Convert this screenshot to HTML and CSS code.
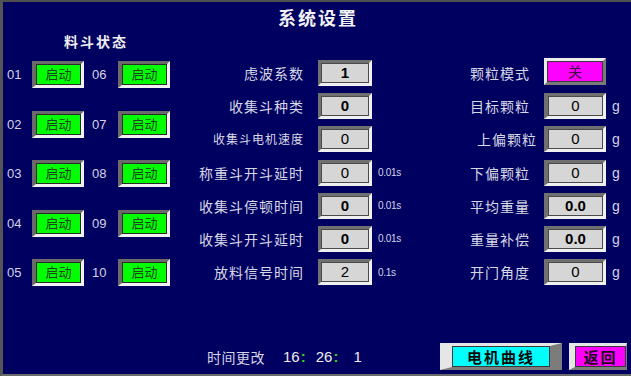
FILE: index.html
```html
<!DOCTYPE html>
<html lang="zh-CN">

<head>
    <meta charset="UTF-8">
    <meta name="viewport" content="width=device-width, initial-scale=1.0">
    <title>系统设置</title>
    <link rel="stylesheet" href="styles.css">
</head>

<body>
    <div class="screen">

        <div class="title">系统设置</div>

        <div class="main">

            <!-- hopper status -->
            <div class="status">
                <div class="status-head">料斗状态</div>
                <div class="status-grid">
                    <span class="num">01</span><div class="btn-start"><span>启动</span></div>
                    <span class="num second">06</span><div class="btn-start"><span>启动</span></div>

                    <span class="num">02</span><div class="btn-start"><span>启动</span></div>
                    <span class="num second">07</span><div class="btn-start"><span>启动</span></div>

                    <span class="num">03</span><div class="btn-start"><span>启动</span></div>
                    <span class="num second">08</span><div class="btn-start"><span>启动</span></div>

                    <span class="num">04</span><div class="btn-start"><span>启动</span></div>
                    <span class="num second">09</span><div class="btn-start"><span>启动</span></div>

                    <span class="num">05</span><div class="btn-start"><span>启动</span></div>
                    <span class="num second">10</span><div class="btn-start"><span>启动</span></div>
                </div>
            </div>

            <!-- timing params -->
            <div class="params">
                <div class="row">
                    <label>虑波系数</label>
                    <div class="field"><span class="bold">1</span></div>
                </div>
                <div class="row">
                    <label>收集斗种类</label>
                    <div class="field"><span class="bold">0</span></div>
                </div>
                <div class="row">
                    <label class="small">收集斗电机速度</label>
                    <div class="field"><span>0</span></div>
                </div>
                <div class="row">
                    <label>称重斗开斗延时</label>
                    <div class="field"><span>0</span></div>
                    <span class="unit">0.01s</span>
                </div>
                <div class="row">
                    <label>收集斗停顿时间</label>
                    <div class="field"><span class="bold">0</span></div>
                    <span class="unit">0.01s</span>
                </div>
                <div class="row">
                    <label>收集斗开斗延时</label>
                    <div class="field"><span class="bold">0</span></div>
                    <span class="unit">0.01s</span>
                </div>
                <div class="row">
                    <label>放料信号时间</label>
                    <div class="field"><span>2</span></div>
                    <span class="unit">0.1s</span>
                </div>
            </div>

            <!-- weight params -->
            <div class="params right">
                <div class="row">
                    <label>颗粒模式</label>
                    <div class="toggle"><span>关</span></div>
                </div>
                <div class="row">
                    <label>目标颗粒</label>
                    <div class="field"><span>0</span></div>
                    <span class="g">g</span>
                </div>
                <div class="row">
                    <label class="shift">上偏颗粒</label>
                    <div class="field"><span>0</span></div>
                    <span class="g">g</span>
                </div>
                <div class="row">
                    <label>下偏颗粒</label>
                    <div class="field"><span>0</span></div>
                    <span class="g">g</span>
                </div>
                <div class="row">
                    <label>平均重量</label>
                    <div class="field"><span class="bold">0.0</span></div>
                    <span class="g">g</span>
                </div>
                <div class="row">
                    <label>重量补偿</label>
                    <div class="field"><span class="bold">0.0</span></div>
                    <span class="g">g</span>
                </div>
                <div class="row">
                    <label>开门角度</label>
                    <div class="field"><span>0</span></div>
                    <span class="g">g</span>
                </div>
            </div>

        </div>

        <div class="footer">
            <div class="clock">
                <span class="clock-label">时间更改</span>
                <span class="hh">16</span><span class="sep">:</span>
                <span class="mm">26</span><span class="sep">:</span>
                <span class="ss">1</span>
            </div>
            <div class="btn-curve"><span>电机曲线</span></div>
            <div class="btn-back"><span>返回</span></div>
        </div>

    </div>
</body>

</html>
```

FILE: styles.css
```css
body {
    margin: 0;
    background: #000060;
}

.screen {
    width: 631px;
    height: 376px;
    box-sizing: border-box;
    background: #000060;
    border-top: 2px solid #505050;
    border-left: 3px solid #555555;
    border-bottom: 2px solid #6a6a6a;
    display: flex;
    flex-direction: column;
    font-family: "Noto Sans CJK SC", "Liberation Sans", sans-serif;
    color: #d8d8e4;
}

.title {
    height: 31px;
    line-height: 31px;
    text-align: center;
    font-size: 18px;
    font-weight: bold;
    letter-spacing: 2px;
    color: #f2f2f2;
    padding-left: 2px;
}

.main {
    display: flex;
}

/* ---- left: hopper status ---- */

.status {
    width: 187px;
    padding-left: 4px;
    box-sizing: border-box;
}

.status-head {
    height: 17px;
    line-height: 17px;
    font-size: 14px;
    font-weight: bold;
    letter-spacing: 2px;
    color: #eeeeee;
    padding-left: 57px;
}

.status-grid {
    margin-top: 11px;
    display: grid;
    grid-template-columns: 25px 52px 34px 52px;
    grid-auto-rows: 27px;
    row-gap: 22.5px;
    align-items: center;
}

.num {
    font-family: "Liberation Sans", sans-serif;
    font-size: 13px;
    color: #d4d4e6;
}

.num.second {
    padding-left: 8px;
}

.btn-start {
    height: 27px;
    box-sizing: border-box;
    border-style: solid;
    border-width: 3px 3px 3px 4px;
    border-color: #6a6a6a #f2f2f2 #f2f2f2 #6a6a6a;
    display: flex;
}

.btn-start span {
    flex: 1;
    background: #00ff00;
    border: 1px solid #2a2a2a;
    text-align: center;
    line-height: 18px;
    font-size: 13px;
    color: #1e421e;
}

/* ---- parameter columns ---- */

.params {
    width: 240px;
    padding-top: 27px;
    display: flex;
    flex-direction: column;
    gap: 7.2px;
}

.params.right {
    width: auto;
}

.row {
    display: flex;
    align-items: center;
    height: 26px;
}

.row label {
    width: 114px;
    text-align: right;
    font-size: 14px;
    letter-spacing: 1px;
    line-height: 20px;
}

.row label.small {
    font-size: 12px;
}

.right .row label {
    width: 100px;
}

.right .row label.shift {
    margin-right: -7px;
    padding-right: 7px;
    width: 107px;
    box-sizing: border-box;
    position: relative;
    left: 7px;
}

.field {
    width: 54px;
    height: 26px;
    margin-left: 14px;
    box-sizing: border-box;
    border-style: solid;
    border-width: 3px;
    border-color: #707070 #f0f0f0 #f0f0f0 #707070;
    display: flex;
}

.right .field {
    width: 62px;
    border-left-width: 4px;
}

.field span {
    flex: 1;
    background: #d6d6d6;
    border: 1px solid #4a4a4a;
    text-align: center;
    font-family: "Liberation Sans", sans-serif;
    font-size: 15px;
    line-height: 18px;
    color: #000000;
}

.field span.bold {
    font-weight: bold;
}

.toggle {
    width: 62px;
    height: 27px;
    margin-left: 14px;
    margin-top: -3px;
    box-sizing: border-box;
    border-style: solid;
    border-width: 3px;
    border-color: #ececec #7a7a7a #7a7a7a #ececec;
    display: flex;
}

.toggle span {
    flex: 1;
    background: #ff00ff;
    border: 1px solid #3a3a3a;
    text-align: center;
    font-size: 14px;
    line-height: 19px;
    color: #3a1040;
}

.unit {
    margin-left: 6px;
    font-family: "Liberation Sans", sans-serif;
    font-size: 10px;
    letter-spacing: -0.3px;
    color: #d4d4e6;
}

.g {
    margin-left: 6px;
    font-family: "Liberation Sans", sans-serif;
    font-size: 14px;
    color: #d4d4e6;
}

/* ---- footer ---- */

.footer {
    margin-top: auto;
    margin-bottom: 4px;
    height: 27px;
    display: flex;
    align-items: center;
    padding-right: 4px;
}

.clock {
    display: flex;
    align-items: center;
    padding-left: 204px;
    font-family: "Liberation Sans", sans-serif;
    font-size: 15px;
    color: #eeeeee;
}

.clock-label {
    width: 76px;
    font-family: "Noto Sans CJK SC", sans-serif;
    font-size: 14px;
    letter-spacing: 0.5px;
    color: #d4d4e6;
}

.sep {
    color: #22dd22;
    font-weight: bold;
    width: 4px;
    margin-left: 1px;
}

.mm {
    margin-left: 11px;
}

.ss {
    margin-left: 16px;
}

.btn-curve {
    margin-left: auto;
    width: 122px;
    height: 27px;
    box-sizing: border-box;
    border-style: solid;
    border-width: 3px 12px 3px 12px;
    border-color: #e6e6e6 #7c7c7c #7c7c7c #e6e6e6;
    display: flex;
}

.btn-curve span {
    flex: 1;
    background: #00ffff;
    border: 1px solid #3a3a3a;
    text-align: center;
    font-size: 15px;
    font-weight: bold;
    letter-spacing: 2px;
    line-height: 19px;
    color: #0a0a0a;
}

.btn-back {
    margin-left: 7px;
    width: 58px;
    height: 27px;
    box-sizing: border-box;
    border-style: solid;
    border-width: 3px 1px 3px 6px;
    border-color: #e6e6e6 #7c7c7c #7c7c7c #e6e6e6;
    display: flex;
}

.btn-back span {
    flex: 1;
    background: #ff00ff;
    border: 1px solid #3a3a3a;
    text-align: center;
    font-size: 15px;
    font-weight: bold;
    letter-spacing: 2px;
    line-height: 19px;
    color: #1a0a1a;
}
```
